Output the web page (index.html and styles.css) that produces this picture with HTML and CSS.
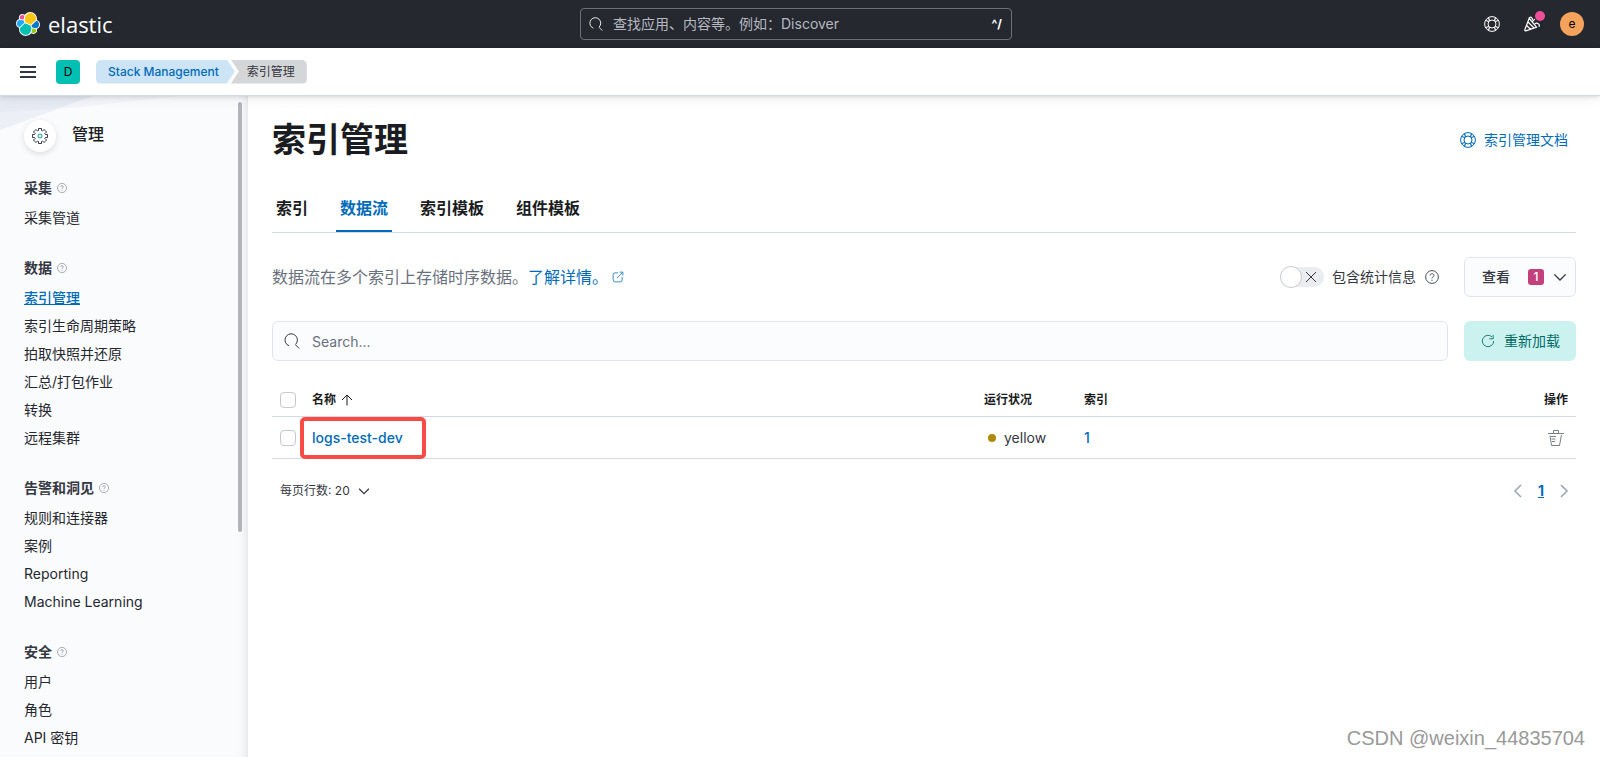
FILE: index.html
```html
<!DOCTYPE html>
<html lang="zh-CN">
<head>
<meta charset="utf-8">
<meta name="viewport" content="width=device-width, initial-scale=1">
<title>索引管理 - Elastic</title>
<link rel="stylesheet" href="styles.css">
</head>
<body>
<svg class="sprite" aria-hidden="true">
  <symbol id="i-search" viewBox="0 0 16 16"><path d="M11.500 11.800l3.700 3.700M5 12.800A6.200 6.200 0 1 1 13 9.200L11.600 11.600"/></symbol>
  <symbol id="i-help" viewBox="0 0 16 16"><circle cx="8" cy="8" r="7.400"/><circle cx="8" cy="8" r="4"/><path stroke-width="1.200" d="M4.500 1.500L5.500 4.800M1.500 4.500L4.800 5.500M11.500 1.500L10.500 4.800M14.500 4.500L11.200 5.500M4.500 14.500L5.500 11.200M1.500 11.500L4.800 10.500M11.500 14.500L10.500 11.200M14.500 11.500L11.200 10.500"/></symbol>
  <symbol id="i-question" viewBox="0 0 16 16"><circle cx="8" cy="8" r="7.3"/><path d="M5.800 6.400C5.800 5 6.700 4.200 8 4.200S10.200 5 10.200 6.200C10.200 7.700 8 7.800 8 9.500M8 11v1.400"/></symbol>
  <symbol id="i-down" viewBox="0 0 16 16"><path stroke-width="1.600" d="M1.500 5L8 11.500 14.500 5"/></symbol>
</svg>

<header class="topbar">
  <a class="brand" href="#" aria-label="elastic">
    <svg class="brand-mark" viewBox="0 0 32 32" aria-hidden="true">
      <path fill="#fff" d="M32 16.770c0-2.680-1.660-5.020-4.160-5.940.11-.57.17-1.140.17-1.740C28 4.080 23.930 0 18.930 0c-2.930 0-5.650 1.400-7.360 3.770a4.790 4.790 0 0 0-2.950-1c-2.660 0-4.820 2.160-4.820 4.820 0 .58.1 1.140.3 1.660A6.350 6.350 0 0 0 0 15.190c0 2.690 1.670 5.040 4.170 5.950-.11.57-.17 1.150-.17 1.740A9.060 9.060 0 0 0 13.060 32a9.050 9.050 0 0 0 7.350-3.800c.84.66 1.870 1.030 2.950 1.030 2.660 0 4.820-2.160 4.820-4.820 0-.58-.1-1.140-.3-1.660A6.370 6.370 0 0 0 32 16.770"/>
      <path fill="#fec514" d="M12.580 13.787l7.002 3.211 7.066-6.213a7.850 7.850 0 0 0 .152-1.557c0-4.287-3.464-7.773-7.722-7.773a7.800 7.800 0 0 0-6.406 3.383l-1.176 6.122z"/>
      <path fill="#00bfb3" d="M5.333 21.229c-.1.514-.149 1.035-.149 1.573 0 4.301 3.485 7.801 7.767 7.801 2.579 0 4.989-1.287 6.437-3.437l1.167-6.107-1.557-2.988-7.030-3.215z"/>
      <path fill="#f04e98" d="M5.288 9.067l4.799 1.138 1.051-5.480a3.820 3.820 0 0 0-2.308-.769 3.846 3.846 0 0 0-3.827 3.854c0 .438.1.861.285 1.257z"/>
      <path fill="#1ba9f5" d="M4.870 10.214c-2.145.712-3.649 2.779-3.649 5.041 0 2.203 1.353 4.169 3.384 4.949l6.734-6.117-1.236-2.656z"/>
      <path fill="#93c90e" d="M20.870 27.173a3.800 3.800 0 0 0 2.299.781 3.846 3.846 0 0 0 3.827-3.854c0-.438-.096-.861-.285-1.257l-4.794-1.129z"/>
      <path fill="#07c" d="M21.848 20.563l5.279 1.243c2.144-.713 3.648-2.779 3.648-5.042 0-2.199-1.357-4.160-3.390-4.940l-6.904 6.083z"/>
    </svg>
    <span class="brand-name">elastic</span>
  </a>
  <label class="global-search">
    <svg class="icon small" aria-hidden="true"><use href="#i-search"/></svg>
    <input type="search" aria-label="搜索" placeholder="查找应用、内容等。例如：Discover">
    <kbd>^/</kbd>
  </label>
  <div class="top-actions">
    <button class="icon-button" type="button" aria-label="帮助"><svg class="icon" aria-hidden="true"><use href="#i-help"/></svg></button>
    <button class="icon-button news" type="button" aria-label="新闻">
      <svg class="icon" viewBox="0 0 16 16" aria-hidden="true"><path stroke-width="1.200" d="M5.200 2.300L.8 13.800c-.2.8.2 1.200 1 1l10.700-3.600zM5.200 2.300l7.300 8.900M4 6l6.500 6.500M2.500 9.500l4.500 4M8.500 5.500l2.300-2.300M10.500 8.500c1-1.500 2.500-1.700 3.800-.7 1.300.9 1 2.300.6 3M5.500 1.500c1.500-.8 2.800-.2 3.100 2.500"/></svg>
      <span class="dot"></span>
    </button>
    <button class="avatar" type="button" aria-label="用户菜单">e</button>
  </div>
</header>

<div class="subbar">
  <button class="menu" type="button" aria-label="菜单"><span></span><span></span><span></span></button>
  <button class="space" type="button">D</button>
  <nav class="crumbs" aria-label="Breadcrumbs">
    <a class="crumb first" href="#">Stack Management</a>
    <span class="crumb last">索引管理</span>
  </nav>
</div>

<div class="layout">
  <aside class="sidebar">
    <svg class="decor" viewBox="0 0 180 36" aria-hidden="true"><path fill="#f3f5fa" d="M0 0h180L60 13 0 16z"/><path fill="#eceff6" d="M0 0h93L0 34z"/><path fill="#e6eaf3" d="M0 0h93L55 13 0 16z"/></svg>
    <div class="side-title">
      <span class="side-icon"><svg viewBox="0 0 16 16" aria-hidden="true"><path class="gear" d="M6.500 2.500V.5h3v2l1 .5L12 1.500 14.500 4 13 5.500l.5 1h2v3h-2l-.5 1 1.500 1.500-2.500 2.500-1.500-1.500-1 .5v2h-3v-2l-1-.5L4 14.500 1.500 12 3 10.500l-.5-1h-2v-3h2l.5-1L1.500 4 4 1.500 5.500 3z"/><circle cx="8" cy="8" r="2"/></svg></span>
      <h2>管理</h2>
    </div>
    <nav class="side-nav" aria-label="管理">
      <section><h3>采集<svg class="icon tiny" aria-hidden="true"><use href="#i-question"/></svg></h3>
        <a href="#">采集管道</a></section>
      <section><h3>数据<svg class="icon tiny" aria-hidden="true"><use href="#i-question"/></svg></h3>
        <a class="current" href="#">索引管理</a><a href="#">索引生命周期策略</a><a href="#">拍取快照并还原</a><a href="#">汇总/打包作业</a><a href="#">转换</a><a href="#">远程集群</a></section>
      <section><h3>告警和洞见<svg class="icon tiny" aria-hidden="true"><use href="#i-question"/></svg></h3>
        <a href="#">规则和连接器</a><a href="#">案例</a><a href="#">Reporting</a><a href="#">Machine Learning</a></section>
      <section><h3>安全<svg class="icon tiny" aria-hidden="true"><use href="#i-question"/></svg></h3>
        <a href="#">用户</a><a href="#">角色</a><a href="#">API 密钥</a></section>
    </nav>
    <span class="scroll-thumb"></span>
  </aside>

  <main class="content">
    <div class="page-head">
      <h1>索引管理</h1>
      <a class="docs" href="#"><svg class="icon" aria-hidden="true"><use href="#i-help"/></svg>索引管理文档</a>
    </div>
    <nav class="tabs" aria-label="索引管理">
      <a href="#">索引</a><a class="active" href="#">数据流</a><a href="#">索引模板</a><a href="#">组件模板</a>
    </nav>

    <div class="intro">
      <p>数据流在多个索引上存储时序数据。<a href="#">了解详情。<svg class="icon external" viewBox="0 0 16 16" aria-hidden="true"><path d="M8 2.500H4A2.500 2.500 0 0 0 1.500 5v7A2.500 2.500 0 0 0 4 14.500h7a2.500 2.500 0 0 0 2.500-2.500V8M10 1.500h4.500V6M14 2L6.500 9.500"/></svg></a></p>
      <label class="switch"><input type="checkbox"><span class="track"><svg viewBox="0 0 12 12" aria-hidden="true"><path d="M1 1l10 10M11 1L1 11"/></svg></span>包含统计信息</label>
      <svg class="icon question" aria-hidden="true"><use href="#i-question"/></svg>
      <button class="view" type="button"><span>查看</span><span class="count">1</span><svg class="icon" aria-hidden="true"><use href="#i-down"/></svg></button>
    </div>

    <div class="search-row">
      <label class="search"><svg class="icon" aria-hidden="true"><use href="#i-search"/></svg><input type="search" aria-label="Search" placeholder="Search..."></label>
      <button class="reload" type="button"><svg class="icon" viewBox="0 0 16 16" aria-hidden="true"><path d="M12.500 3.300A6.500 6.500 0 1 0 14.500 8M13.900 1v4.500H9.500"/></svg>重新加载</button>
    </div>

    <table class="streams">
      <colgroup><col class="c-check"><col><col class="c-health"><col class="c-index"><col class="c-action"></colgroup>
      <thead>
        <tr><th><input type="checkbox" aria-label="选择所有行"></th><th><button class="sort" type="button">名称<svg class="icon" viewBox="0 0 12 12" aria-hidden="true"><path d="M6 11.500V1M1 6l5-5 5 5"/></svg></button></th><th>运行状况</th><th>索引</th><th class="right">操作</th></tr>
      </thead>
      <tbody>
        <tr><td><input type="checkbox" aria-label="选择 logs-test-dev"></td><td class="name"><a href="#">logs-test-dev</a><span class="highlight"></span></td><td><span class="health">yellow</span></td><td><a href="#">1</a></td><td><button class="trash" type="button" aria-label="删除"><svg viewBox="0 0 16 16" aria-hidden="true"><path d="M0 3.500h16M5.500 3.500v-3h5v3M2 5.500l1.500 10h8L13.500 5M3 6.500h5M3.500 9h4M4 11.500h3"/></svg></button></td></tr>
      </tbody>
    </table>

    <div class="paging">
      <button class="rows" type="button">每页行数: 20<svg class="icon" aria-hidden="true"><use href="#i-down"/></svg></button>
      <nav class="pages" aria-label="分页">
        <button type="button" disabled aria-label="上一页"><svg class="icon" viewBox="0 0 16 16" aria-hidden="true"><path stroke-width="1.500" d="M11 2L5 8l6 6"/></svg></button>
        <a href="#" aria-current="page">1</a>
        <button type="button" disabled aria-label="下一页"><svg class="icon" viewBox="0 0 16 16" aria-hidden="true"><path stroke-width="1.500" d="M5 2l6 6-6 6"/></svg></button>
      </nav>
    </div>
  </main>
</div>
<div class="watermark">CSDN @weixin_44835704</div>
</body>
</html>
```
FILE: styles.css
```css
* { box-sizing: border-box; }
body {
  margin: 0;
  height: 100vh;
  display: flex;
  flex-direction: column;
  overflow: hidden;
  background: #fff;
  color: #343741;
  font: 14px/20px Inter, "Noto Sans CJK SC", sans-serif;
}
h1, h2, h3, p { margin: 0; }
a { color: #006bb8; text-decoration: none; }
button, input, kbd { font: inherit; color: inherit; }
button { margin: 0; padding: 0; border: 0; background: none; cursor: pointer; }
input { outline: 0; }
.sprite { position: absolute; width: 0; height: 0; }
.icon { width: 16px; height: 16px; flex: none; fill: none; stroke: currentColor; }
.icon.small { width: 14px; height: 14px; }
.icon.tiny { width: 10px; height: 10px; color: #7b7f8a; }

.topbar {
  display: flex;
  justify-content: space-between;
  align-items: center;
  flex: none;
  height: 48px;
  padding: 0 16px;
  background: #25282f;
  color: #fff;
}
.brand { display: flex; align-items: center; gap: 8px; width: 104px; color: #fff; }
.brand-mark { width: 24px; height: 24px; }
.brand-name { font: 400 22px/24px "Open Sans", "Noto Sans", sans-serif; }
.global-search {
  display: flex;
  align-items: center;
  gap: 10px;
  width: 432px;
  height: 32px;
  padding: 0 9px 0 8px;
  border: 1px solid #6d7078;
  border-radius: 4px;
}
.global-search input { flex: 1; min-width: 0; padding: 0; border: 0; background: none; }
.global-search input::placeholder { color: #b5b8c1; opacity: 1; }
.global-search kbd { font-size: 12px; font-weight: 700; }
.top-actions { display: flex; justify-content: flex-end; align-items: center; }
.icon-button { display: grid; place-items: center; width: 40px; height: 40px; position: relative; }
.dot { position: absolute; top: 7px; right: 7px; width: 10px; height: 10px; border-radius: 50%; background: #f04e98; }
.avatar { width: 24px; height: 24px; margin-left: 8px; border-radius: 50%; background: #f5a35c; color: #000; font-size: 12px; line-height: 24px; }

.subbar {
  display: flex;
  align-items: center;
  flex: none;
  height: 48px;
  padding: 0 16px;
  position: relative;
  z-index: 2;
  border-bottom: 1px solid #d3dae6;
  box-shadow: 0 1px 4px rgba(0, 0, 0, .12), 0 3px 12px rgba(0, 0, 0, .06);
  background: #fff;
}
.menu { display: grid; gap: 3px; width: 24px; padding: 0 4px; }
.menu span { height: 2px; background: #343741; }
.space { width: 24px; height: 24px; margin-left: 16px; border-radius: 4px; background: #00bfb3; color: #000; font-size: 12px; line-height: 24px; }
.crumbs { display: flex; margin-left: 16px; font-size: 12px; font-weight: 500; line-height: 24px; }
.crumb.first {
  padding: 0 16px 0 12px;
  border-radius: 5px 0 0 5px;
  background: #cce4f5;
  clip-path: polygon(0 0, calc(100% - 8px) 0, 100% 50%, calc(100% - 8px) 100%, 0 100%);
}
.crumb.last {
  margin-left: -4px;
  padding: 0 12px 0 16px;
  border-radius: 0 5px 5px 0;
  background: #d5d6d8;
  font-weight: 400;
  clip-path: polygon(0 0, 100% 0, 100% 100%, 0 100%, 8px 50%);
}

.layout { display: flex; flex: 1; min-height: 0; }
.sidebar {
  position: relative;
  flex: none;
  width: 248px;
  padding: 24px;
  overflow: hidden;
  background: #fafbfd;
  box-shadow: inset -8px 0 8px -6px rgba(0, 0, 0, .1);
}
.decor { position: absolute; top: 0; left: 0; width: 180px; height: 36px; }
.scroll-thumb { position: absolute; top: 6px; right: 6px; width: 4px; height: 430px; border-radius: 2px; background: #b2b3bd; }
.side-title { display: flex; gap: 16px; position: relative; height: 54px; }
.side-icon { display: grid; place-items: center; width: 32px; height: 32px; border-radius: 50%; background: #fff; box-shadow: 0 2px 6px rgba(0, 0, 0, .12); }
.side-icon svg { width: 16px; height: 16px; fill: none; stroke: #00a69b; }
.side-icon .gear { stroke: #343741; }
.side-title h2 { color: #1a1c21; font-size: 16px; font-weight: 500; line-height: 28px; }
.side-nav { display: grid; gap: 22px; }
.side-nav section { display: grid; }
.side-nav h3 { display: flex; align-items: center; gap: 5px; margin-bottom: 2px; font-size: 14px; font-weight: 600; line-height: 28px; }
.side-nav a { justify-self: start; color: #25272e; line-height: 28px; }
.side-nav .current { color: #006bb8; font-weight: 500; text-decoration: underline; }

.content { flex: 1; min-width: 0; padding: 24px; }
.page-head { display: flex; justify-content: space-between; align-items: center; height: 40px; padding-right: 8px; }
h1 { color: #1a1c21; font-size: 34px; font-weight: 700; line-height: 40px; }
.docs { display: flex; align-items: center; gap: 8px; }
.tabs { display: flex; gap: 24px; height: 49px; margin-top: 24px; border-bottom: 1px solid #d3dae6; }
.tabs a { padding: 0 4px; color: #1a1c21; font-size: 16px; font-weight: 600; line-height: 48px; }
.tabs .active { color: #006bb8; box-shadow: inset 0 -2px #006bb8; }

.intro { display: flex; align-items: center; height: 40px; margin-top: 24px; }
.intro p { flex: 1; color: #69707d; font-size: 16px; line-height: 24px; }
.intro p a { display: inline-flex; align-items: center; gap: 4px; }
.icon.external { width: 12px; height: 12px; }
.switch { display: flex; align-items: center; gap: 8px; }
.switch input { position: absolute; opacity: 0; }
.track { display: flex; align-items: center; justify-content: space-between; width: 44px; height: 20px; padding-right: 7px; border-radius: 10px; background: #ebecf0; }
.track::before { content: ""; width: 20px; height: 20px; border: 1px solid #c8cad0; border-radius: 50%; background: #fff; }
.track svg { width: 12px; height: 12px; fill: none; stroke: #343741; }
.icon.question { width: 14px; height: 14px; margin: 0 25px 0 9px; }
.view, .reload { display: flex; align-items: center; flex: none; width: 112px; height: 40px; padding: 0 8px 0 17px; border-radius: 6px; }
.view { border: 1px solid #e0e4f0; background: #fbfcfd; font-weight: 500; }
.view .icon { width: 14px; height: 14px; }
.count { width: 16px; margin: 0 9px 0 auto; border-radius: 3px; background: #c4407c; color: #fff; font-size: 12px; line-height: 16px; }
.search-row { display: flex; gap: 16px; margin-top: 24px; }
.search { display: flex; flex: 1; align-items: center; gap: 12px; height: 40px; padding: 0 11px; border: 1px solid #e0e4f0; border-radius: 6px; background: #fbfcfd; }
.search input { flex: 1; min-width: 0; padding: 2px 0 0; border: 0; background: none; }
.search input::placeholder { color: #69707d; opacity: 1; }
.reload { gap: 9px; background: #ccf2f0; color: #006b64; }
.reload .icon { width: 14px; height: 14px; }

.streams { width: 100%; margin-top: 22px; border-collapse: collapse; table-layout: fixed; }
.c-check { width: 32px; }
.c-health { width: 100px; }
.c-index { width: 100px; }
.c-action { width: 400px; }
.streams th { height: 33px; padding: 2px 8px 0; border-bottom: 1px solid #d3dae6; color: #1a1c21; font-size: 12px; font-weight: 600; text-align: left; }
.streams td { height: 42px; padding: 2px 8px 0; border-bottom: 1px solid #d3dae6; }
.streams .right { text-align: right; }
.streams td a { font-weight: 500; }
.streams input { appearance: none; display: block; width: 16px; height: 16px; margin: 0; border: 1px solid #c5c8ce; border-radius: 4px; background: #fff; }
.sort { display: flex; align-items: center; gap: 5px; }
.sort .icon { width: 12px; height: 12px; }
.name { position: relative; }
.highlight { position: absolute; top: 0; left: -4px; width: 126px; height: 42px; border: 4px solid #f94b46; border-radius: 5px; pointer-events: none; }
.health { display: flex; align-items: center; gap: 8px; padding-left: 4px; }
.health::before { content: ""; width: 8px; height: 8px; border-radius: 50%; background: #b0890f; }
.trash { display: block; margin: 0 4px 0 auto; }
.trash svg { display: block; width: 16px; height: 16px; fill: none; stroke: #7c7e85; }
.paging { display: flex; justify-content: space-between; align-items: center; margin-top: 20px; padding: 0 4px 0 8px; }
.rows { display: flex; align-items: center; gap: 8px; font-size: 12px; line-height: 24px; }
.rows .icon { width: 12px; height: 12px; }
.pages { display: flex; align-items: center; gap: 12px; color: #98a2b3; }
.pages button { height: 16px; }
.pages .icon { display: block; }
.pages a { font-weight: 700; text-decoration: underline; }
.watermark { position: absolute; right: 15px; bottom: 7px; color: #999; font: 20px/24px "Liberation Sans", sans-serif; text-shadow: 1px 1px 1px #fff; }
```
